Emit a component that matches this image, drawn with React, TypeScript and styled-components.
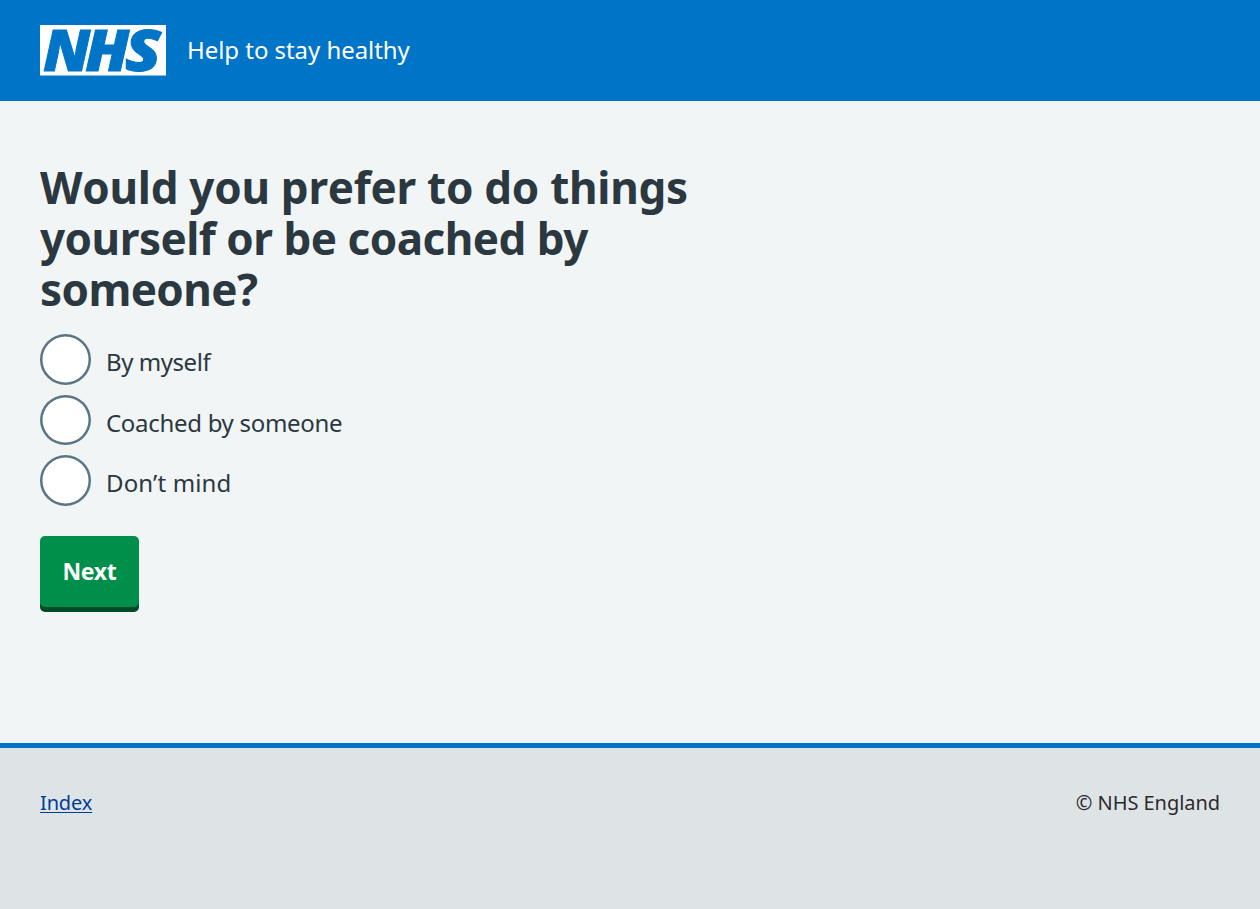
import React from "react";
import styled, { createGlobalStyle } from "styled-components";

const GlobalStyle = createGlobalStyle`
  *, *::before, *::after { box-sizing: border-box; }
  body {
    margin: 0;
    background: #f1f5f6;
    color: #2b3840;
    font-family: "Noto Sans", "Open Sans", sans-serif;
  }
`;

const Page = styled.div`
  display: flex;
  flex-direction: column;
  min-height: 909px;
`;

const Header = styled.header`
  display: flex;
  align-items: center;
  gap: 21px;
  height: 101px;
  padding: 0 40px;
  background: #0075c7;
`;

const Logo = styled.svg`
  display: block;
  width: 126px;
  height: 51px;
  overflow: visible;
`;

const LogoLetter = styled.text`
  font-family: "Noto Sans", "Open Sans", sans-serif;
  font-size: 56px;
  font-weight: 900;
  font-style: italic;
  fill: #0075c7;
  stroke: #0075c7;
  stroke-width: 1px;
`;

const ServiceName = styled.span`
  padding-bottom: 2px;
  color: #fff;
  font-size: 24px;
  line-height: 36px;
  letter-spacing: -0.05px;
`;

const Main = styled.main`
  flex: 1;
  padding: 61px 40px 0;
`;

const Heading = styled.h1`
  width: 780px;
  margin: 0 0 19.4px;
  font-size: 44px;
  font-weight: 700;
  line-height: 51px;
`;

const HeadingLine = styled.span<{ $spacing: number; $kerning: "none" | "normal" }>`
  display: block;
  white-space: nowrap;
  font-kerning: ${(p) => p.$kerning};
  letter-spacing: ${(p) => p.$spacing}px;
`;

const Options = styled.div`
  display: flex;
  flex-direction: column;
  gap: 10px;
`;

const Option = styled.label`
  display: flex;
  align-items: center;
  gap: 15px;
  height: 50.5px;
  cursor: pointer;
`;

const Radio = styled.input`
  appearance: none;
  flex: none;
  width: 51px;
  height: 50.5px;
  margin: 0;
  border-radius: 50%;
  background: #fff;
  box-shadow: inset 0 0 0 2.5px #5b7586;
`;

const OptionText = styled.span<{ $spacing: number }>`
  padding-top: 5px;
  font-size: 24px;
  line-height: 36px;
  letter-spacing: ${(p) => p.$spacing}px;
`;

const NextButton = styled.button`
  display: block;
  width: 99px;
  height: 71px;
  margin: 30.1px 0 0;
  padding: 0;
  border: 0;
  border-radius: 5px;
  background: #008f4b;
  box-shadow: 0 5px 0 #004b27;
  color: #fff;
  font: 700 23px/36px "Noto Sans", "Open Sans", sans-serif;
  letter-spacing: -0.3px;
`;

const Footer = styled.footer`
  display: flex;
  justify-content: space-between;
  height: 166px;
  padding: 40px 40px 0;
  border-top: 5px solid #0075c7;
  background: #dee4e6;
  font-size: 20px;
  line-height: 30px;
`;

const FooterLink = styled.a`
  color: #003d96;
  letter-spacing: -0.15px;
  text-decoration: underline;
  text-decoration-thickness: 1px;
  text-underline-offset: 2px;
`;

const Copyright = styled.span`
  color: #2d2a2d;
  letter-spacing: -0.05px;
`;

const headingLines = [
  { text: "Would you prefer to do things", spacing: -0.28, kerning: "none" as const },
  { text: "yourself or be coached by", spacing: -0.5, kerning: "normal" as const },
  { text: "someone?", spacing: -0.6, kerning: "normal" as const },
];

const options = [
  { text: "By myself", spacing: -0.45 },
  { text: "Coached by someone", spacing: -0.3 },
  { text: "Don’t mind", spacing: 0.15 },
];

export default function App() {
  return (
    <Page>
      <GlobalStyle />
      <Header>
        <Logo viewBox="0 0 126 51" role="img" aria-label="NHS">
          <rect width="126" height="50.5" fill="#fff" />
          <LogoLetter x="3.2" y="45.9" textLength="47" lengthAdjust="spacingAndGlyphs">N</LogoLetter>
          <LogoLetter x="45.2" y="45.9" textLength="44" lengthAdjust="spacingAndGlyphs">H</LogoLetter>
          <LogoLetter x="85" y="45.9" textLength="36" lengthAdjust="spacingAndGlyphs">S</LogoLetter>
        </Logo>
        <ServiceName>Help to stay healthy</ServiceName>
      </Header>
      <Main>
        <Heading>
          {headingLines.map((line) => (
            <HeadingLine key={line.text} $spacing={line.spacing} $kerning={line.kerning}>
              {line.text}
            </HeadingLine>
          ))}
        </Heading>
        <Options>
          {options.map((option) => (
            <Option key={option.text}>
              <Radio type="radio" name="preference" />
              <OptionText $spacing={option.spacing}>{option.text}</OptionText>
            </Option>
          ))}
        </Options>
        <NextButton type="button">Next</NextButton>
      </Main>
      <Footer>
        <FooterLink href="#">Index</FooterLink>
        <Copyright>© NHS England</Copyright>
      </Footer>
    </Page>
  );
}
